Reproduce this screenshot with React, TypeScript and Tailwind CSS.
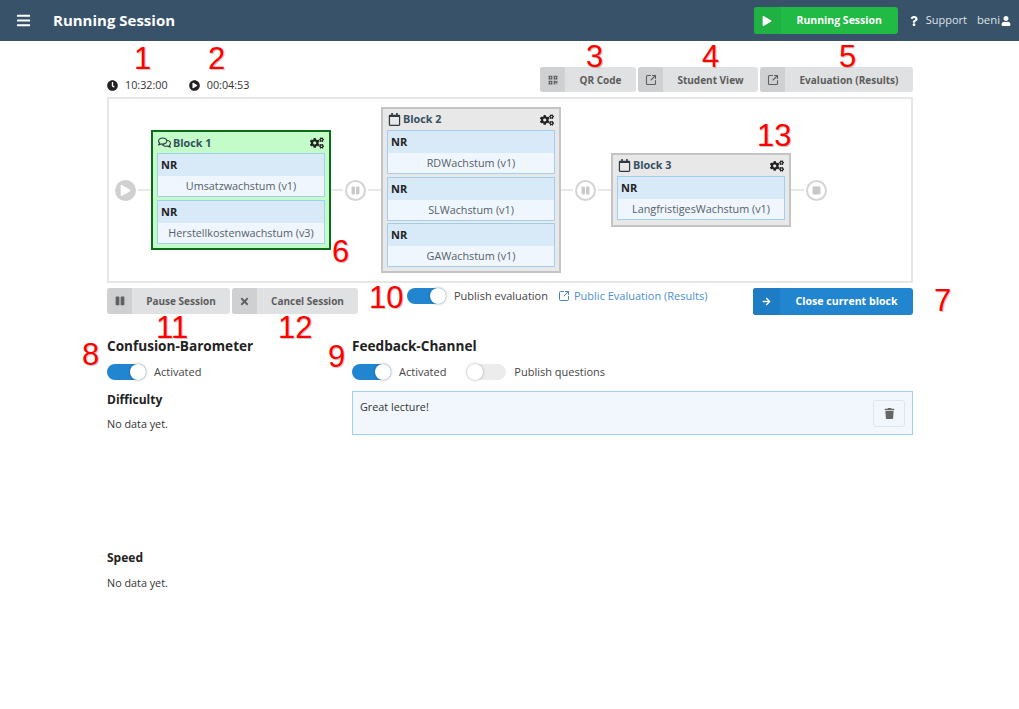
import {
  FaBars,
  FaPlay,
  FaQuestion,
  FaUser,
  FaClock,
  FaPlayCircle,
  FaQrcode,
  FaRegComments,
  FaRegCalendar,
  FaCogs,
  FaPause,
  FaStop,
  FaTimes,
  FaArrowRight,
  FaTrash,
} from "react-icons/fa";
import { SquareArrowOutUpRight } from "lucide-react";
import type { ReactNode } from "react";

type Instance = { title: string };

function Note({ n, className }: { n: string; className: string }) {
  return (
    <span
      className={`absolute font-['Liberation_Sans',sans-serif] text-[31px] leading-none text-[#ff0000] [text-shadow:1px_1px_1px_rgba(0,0,0,0.25)] ${className}`}
    >
      {n}
    </span>
  );
}

function LabeledButton({
  icon,
  label,
  width,
}: {
  icon: ReactNode;
  label: string;
  width: string;
}) {
  return (
    <button
      className={`flex h-[25px] items-stretch overflow-hidden rounded-[3px] bg-[#e0e1e2] text-[10px] font-bold text-[#5c5c5c] ${width}`}
    >
      <span className="flex w-[25px] items-center justify-center bg-[#cfd0d1] text-[#5f6061]">
        {icon}
      </span>
      <span className="flex-1 text-center leading-[26px]">{label}</span>
    </button>
  );
}

function Toggle({ on = true }: { on?: boolean }) {
  return (
    <span
      className={`flex h-4 w-[39px] shrink-0 rounded-full ${
        on ? "justify-end bg-[#2185d0]" : "justify-start bg-[#ececec]"
      }`}
    >
      <span className="h-4 w-4 rounded-full bg-white shadow-[0_0_2px_1px_rgba(34,36,38,0.2)]" />
    </span>
  );
}

function Connector({ children }: { children: ReactNode }) {
  return (
    <span className="flex h-[21px] w-[21px] shrink-0 items-center justify-center rounded-full border-2 border-[#d4d4d4] bg-white text-[9px] text-[#c8c8c8]">
      {children}
    </span>
  );
}

function Line({ className }: { className: string }) {
  return <span className={`h-[2px] shrink-0 bg-[#e8e8e8] ${className}`} />;
}

function Block({
  name,
  icon,
  items,
  active,
}: {
  name: string;
  icon: ReactNode;
  items: Instance[];
  active?: boolean;
}) {
  return (
    <div
      className={`min-h-[74px] w-[180px] shrink-0 border-2 px-1 pb-[4px] ${
        active ? "border-[#0b6b16] bg-[#c3fcc8]" : "border-[#c4c4c4] bg-[#e8e8e8]"
      }`}
    >
      <div className="flex h-[21px] items-center text-[#37505f]">
        <span className="flex w-[16px] shrink-0 pl-px text-[13px] text-[#2c3a44]">{icon}</span>
        <span className="text-[10.8px] font-bold">{name}</span>
        <FaCogs className="ml-auto mr-px text-[14px] text-[#222]" />
      </div>
      <div className="flex flex-col gap-[2.5px]">
        {items.map((item) => (
          <div key={item.title} className="border border-[#a3cfef] bg-[#eff6fd] text-[10.8px]">
            <div className="h-[22px] bg-[#d8e9f8] pl-[3px] text-[11px] leading-[22px] font-bold text-[#222]">
              NR
            </div>
            <div className="h-[20px] text-center leading-[19px] text-[#555f69]">
              {item.title}
            </div>
          </div>
        ))}
      </div>
    </div>
  );
}

export default function App() {
  return (
    <div className="relative h-[709px] w-[1019px] overflow-hidden bg-white font-['Open_Sans',sans-serif] text-[10.8px] text-[#333]">
      <header className="flex h-[41px] items-center bg-[#38526a] text-white">
        <FaBars className="ml-[16px] text-[15px]" />
        <h1 className="ml-[22px] text-[15px] font-bold">Running Session</h1>
        <button className="ml-auto flex h-[27px] w-[144px] items-stretch overflow-hidden rounded-[3px] bg-[#21ba45] text-[10.5px] font-bold">
          <span className="flex w-[27px] items-center justify-center bg-[#1fb141]">
            <FaPlay className="text-[10px]" />
          </span>
          <span className="flex-1 text-center leading-[27px]">Running Session</span>
        </button>
        <span className="ml-[11px] flex items-center text-[11px] text-[#dfe4e8]">
          <FaQuestion className="mr-[7px] text-[10px] text-white" />
          Support
        </span>
        <span className="ml-[10px] mr-[8px] flex items-center text-[11.3px] text-[#dfe4e8]">
          beni
          <FaUser className="ml-[1px] text-[10px] text-white" />
        </span>
      </header>

      <main className="ml-[107px] w-[806px]">
        <div className="mt-[26px] flex h-[25px] items-end">
          <div className="flex h-[14px] items-center gap-[21px]">
            <span className="flex items-center gap-[7px]">
              <FaClock className="text-[11px] text-[#222]" />
              10:32:00
            </span>
            <span className="flex items-center gap-[7px]">
              <FaPlayCircle className="text-[11px] text-[#222]" />
              00:04:53
            </span>
          </div>
          <div className="ml-auto flex gap-[2px]">
            <LabeledButton icon={<FaQrcode className="text-[10px]" />} label="QR Code" width="w-[96px]" />
            <LabeledButton
              icon={<SquareArrowOutUpRight size={12} strokeWidth={2.2} />}
              label="Student View"
              width="w-[120px]"
            />
            <LabeledButton
              icon={<SquareArrowOutUpRight size={12} strokeWidth={2.2} />}
              label="Evaluation (Results)"
              width="w-[153px]"
            />
          </div>
        </div>

        <section className="mt-[5px] flex h-[186px] items-center border-2 border-[#e6e6e6] pl-[6px]">
          <span className="flex h-[21px] w-[21px] shrink-0 items-center justify-center rounded-full bg-[#d0d0d0] text-[11px] text-white">
            <FaPlay />
          </span>
          <Line className="ml-[2px] w-[13px]" />
          <Block
            name="Block 1"
            icon={<FaRegComments />}
            active
            items={[{ title: "Umsatzwachstum (v1)" }, { title: "Herstellkostenwachstum (v3)" }]}
          />
          <Line className="mr-[2px] w-[12px]" />
          <Connector>
            <FaPause />
          </Connector>
          <Line className="ml-[2px] w-[13px]" />
          <Block
            name="Block 2"
            icon={<FaRegCalendar />}
            items={[
              { title: "RDWachstum (v1)" },
              { title: "SLWachstum (v1)" },
              { title: "GAWachstum (v1)" },
            ]}
          />
          <Line className="mr-[2px] w-[12px]" />
          <Connector>
            <FaPause />
          </Connector>
          <Line className="ml-[2px] w-[13px]" />
          <Block
            name="Block 3"
            icon={<FaRegCalendar />}
            items={[{ title: "LangfristigesWachstum (v1)" }]}
          />
          <Line className="mr-[2px] w-[13px]" />
          <Connector>
            <FaStop />
          </Connector>
        </section>

        <div className="mt-[5px] flex h-[27px] items-start">
          <div className="flex gap-[2px]">
            <LabeledButton icon={<FaPause className="text-[10px]" />} label="Pause Session" width="w-[123px] !h-[26px]" />
            <LabeledButton icon={<FaTimes className="text-[11px]" />} label="Cancel Session" width="w-[126px] !h-[26px]" />
          </div>
          <div className="ml-[49px] flex items-center text-[11px]">
            <Toggle />
            <span className="ml-[8px] text-[#444]">Publish evaluation</span>
            <SquareArrowOutUpRight size={12} strokeWidth={2} className="ml-[10px] text-[#4183c4]" />
            <span className="ml-[4px] text-[#4b8fd0]">Public Evaluation (Results)</span>
          </div>
          <button className="ml-auto flex h-[27px] w-[160px] items-stretch overflow-hidden rounded-[3px] bg-[#2185d0] text-[10.6px] font-bold text-white">
            <span className="flex w-[27px] items-center justify-center bg-[#1d7cc4]">
              <FaArrowRight className="text-[9px]" />
            </span>
            <span className="flex-1 text-center leading-[27px]">Close current block</span>
          </button>
        </div>

        <div className="mt-[21px] flex gap-[98px]">
          <div className="w-[147px] shrink-0">
            <h2 className="h-[20px] text-[13.6px] leading-[20px] font-bold whitespace-nowrap text-[#222]">
              Confusion-Barometer
            </h2>
            <div className="mt-[8px] flex items-center text-[11px]">
              <Toggle />
              <span className="ml-[8px] text-[#444]">Activated</span>
            </div>
            <h3 className="mt-[10px] h-[18px] text-[12px] leading-[18px] font-bold text-[#222]">Difficulty</h3>
            <p className="mt-[7px] h-[16px] leading-[16px]">No data yet.</p>
            <h3 className="mt-[117px] h-[18px] text-[12px] leading-[18px] font-bold text-[#222]">Speed</h3>
            <p className="mt-[8px] h-[16px] leading-[16px]">No data yet.</p>
          </div>
          <div className="flex-1">
            <h2 className="h-[20px] text-[13.6px] leading-[20px] font-bold text-[#222]">Feedback-Channel</h2>
            <div className="mt-[8px] flex items-center text-[11px]">
              <Toggle />
              <span className="ml-[8px] text-[#444]">Activated</span>
              <span className="ml-[21px]">
                <Toggle on={false} />
              </span>
              <span className="ml-[8px] text-[#444]">Publish questions</span>
            </div>
            <div className="mt-[10px] flex h-[44px] items-start border border-[#a3cfef] bg-[#f2f7fd] pt-[7px] pl-[7px]">
              <span className="leading-[16px]">Great lecture!</span>
              <button className="mt-px mr-[7px] ml-auto flex h-[27px] w-[32px] items-center justify-center rounded-[3px] border border-[#e2e4e6] text-[11px] text-[#666]">
                <FaTrash />
              </button>
            </div>
          </div>
        </div>
      </main>

      <Note n="1" className="left-[134px] top-[43px]" />
      <Note n="2" className="left-[208px] top-[43px]" />
      <Note n="3" className="left-[586px] top-[41px]" />
      <Note n="4" className="left-[702px] top-[41px]" />
      <Note n="5" className="left-[839px] top-[41px]" />
      <Note n="6" className="left-[332px] top-[236px]" />
      <Note n="7" className="left-[934px] top-[285px]" />
      <Note n="8" className="left-[82px] top-[339px]" />
      <Note n="9" className="left-[328px] top-[341px]" />
      <Note n="10" className="left-[369px] top-[282px]" />
      <Note n="11" className="left-[156px] top-[312px]" />
      <Note n="12" className="left-[278px] top-[312px]" />
      <Note n="13" className="left-[757px] top-[120px]" />
    </div>
  );
}
